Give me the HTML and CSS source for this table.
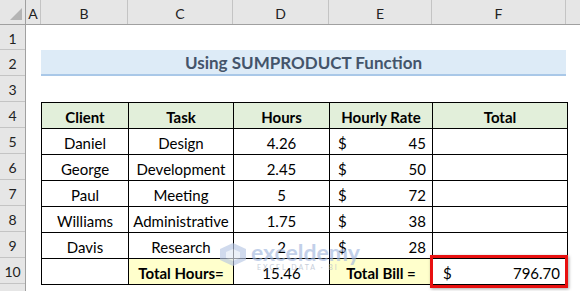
FILE: index.html
```html
<!DOCTYPE html>
<html lang="en">
<head>
    <meta charset="UTF-8">
    <title>Using SUMPRODUCT Function</title>
    <link rel="stylesheet" href="styles.css">
</head>
<body>
    <div class="sheet">
        <div class="col-heads">
            <div class="corner">
                <svg width="26" height="24" viewBox="0 0 26 24">
                    <polygon points="22,8 22,20 10,20" fill="#b4b4b4"/>
                </svg>
            </div>
            <div class="col-head">A</div>
            <div class="col-head">B</div>
            <div class="col-head">C</div>
            <div class="col-head">D</div>
            <div class="col-head">E</div>
            <div class="col-head">F</div>
            <div class="col-head last"></div>
        </div>

        <div class="sheet-body">
            <div class="row-heads">
                <div class="row-head first">1</div>
                <div class="row-head">2</div>
                <div class="row-head">3</div>
                <div class="row-head">4</div>
                <div class="row-head">5</div>
                <div class="row-head">6</div>
                <div class="row-head">7</div>
                <div class="row-head">8</div>
                <div class="row-head">9</div>
                <div class="row-head">10</div>
                <div class="row-head">11</div>
            </div>

            <div class="cells">
                <div class="blank first"></div>
                <div class="title">Using SUMPRODUCT Function</div>
                <div class="blank"></div>

                <table class="data">
                    <colgroup>
                        <col class="c-b">
                        <col class="c-c">
                        <col class="c-d">
                        <col class="c-e">
                        <col class="c-f">
                    </colgroup>
                    <thead>
                        <tr>
                            <th>Client</th>
                            <th>Task</th>
                            <th>Hours</th>
                            <th>Hourly Rate</th>
                            <th>Total</th>
                        </tr>
                    </thead>
                    <tbody>
                        <tr>
                            <td>Daniel</td>
                            <td>Design</td>
                            <td>4.26</td>
                            <td><div class="money"><span>$</span><span>45</span></div></td>
                            <td></td>
                        </tr>
                        <tr>
                            <td>George</td>
                            <td>Development</td>
                            <td>2.45</td>
                            <td><div class="money"><span>$</span><span>50</span></div></td>
                            <td></td>
                        </tr>
                        <tr>
                            <td>Paul</td>
                            <td>Meeting</td>
                            <td>5</td>
                            <td><div class="money"><span>$</span><span>72</span></div></td>
                            <td></td>
                        </tr>
                        <tr>
                            <td>Williams</td>
                            <td>Administrative</td>
                            <td>1.75</td>
                            <td><div class="money"><span>$</span><span>38</span></div></td>
                            <td></td>
                        </tr>
                        <tr>
                            <td>Davis</td>
                            <td>Research</td>
                            <td>2</td>
                            <td><div class="money"><span>$</span><span>28</span></div></td>
                            <td></td>
                        </tr>
                        <tr>
                            <td></td>
                            <td class="label">Total Hours=</td>
                            <td>15.46</td>
                            <td class="label">Total Bill =</td>
                            <td class="result"><div class="money"><span>$</span><span>796.70</span></div></td>
                        </tr>
                    </tbody>
                </table>
            </div>
        </div>

        <div class="watermark">
            <svg width="30" height="25" viewBox="0 0 30 25">
                <polygon points="15,1 28,7 28,18 15,24 2,18 2,7" fill="#b7c7e4"/>
                <polygon points="15,7 22,10 22,16 15,19 8,16 8,10" fill="#e3eaf5"/>
            </svg>
            <div class="wm-text">
                <div class="wm-name">exceldemy</div>
                <div class="wm-sub">EXCEL DATA · BI</div>
            </div>
        </div>
    </div>
</body>
</html>
```

FILE: styles.css
```css
* {
    margin: 0;
    padding: 0;
    box-sizing: border-box;
}

body {
    font-family: Lato, 'Liberation Sans', sans-serif;
    background: white;
    color: #000;
}

.sheet {
    position: relative;
    width: 580px;
    height: 291px;
    overflow: hidden;
}

/* column letters */
.col-heads {
    display: grid;
    grid-template-columns: 26px 15px 87px 105px 96px 103px 134px 1fr;
    height: 25px;
    background: #e6e6e6;
    border-bottom: 1px solid #a0a0a0;
}

.corner {
    border-right: 1px solid #a0a0a0;
}

.corner svg {
    display: block;
}

.col-head {
    display: flex;
    align-items: center;
    justify-content: center;
    font-size: 14px;
    color: #222;
    border-right: 1px solid #c4c4c4;
    padding-top: 2px;
}

.col-head.last {
    border-right: none;
}

/* row numbers + cells */
.sheet-body {
    display: flex;
}

.row-heads {
    width: 26px;
    background: #e6e6e6;
    border-right: 1px solid #a0a0a0;
}

.row-head {
    height: 26px;
    display: flex;
    align-items: center;
    justify-content: center;
    font-size: 14px;
    color: #222;
    border-bottom: 1px solid #c4c4c4;
    padding-top: 2px;
}

.row-head.first {
    height: 25px;
}

.cells {
    padding-left: 15px;
}

.blank {
    height: 26px;
}

.blank.first {
    height: 25px;
}

.title {
    width: 525px;
    height: 26px;
    background: #ddebf7;
    border-bottom: 2px solid #a9c8e8;
    color: #44546a;
    font-size: 17px;
    font-weight: 700;
    display: flex;
    align-items: center;
    justify-content: center;
    padding-top: 1px;
}

/* the table */
.data {
    border-collapse: collapse;
    table-layout: fixed;
    width: 526px;
    font-size: 15px;
}

.c-b { width: 87px; }
.c-c { width: 105px; }
.c-d { width: 96px; }
.c-e { width: 103px; }
.c-f { width: 135px; }

.data th,
.data td {
    border: 1px solid #000;
    height: 26px;
    text-align: center;
    white-space: nowrap;
    padding: 2px 0 0;
}

.data th {
    background: #e2efda;
    font-weight: 700;
}

.data td.label {
    background: #ffffcc;
    font-weight: 700;
}

.money {
    display: flex;
    justify-content: space-between;
    padding: 0 6px 0 8px;
}

.data td.result {
    position: relative;
}

.data td.result .money {
    padding: 0 7px 0 10px;
}

.data td.result::after {
    content: "";
    position: absolute;
    top: -4px;
    left: -3px;
    right: -1px;
    bottom: -4px;
    border: 3px solid #e81010;
    box-shadow: 1px 1px 3px rgba(0, 0, 0, 0.35);
}

/* faint logo over the table */
.watermark {
    position: absolute;
    left: 218px;
    top: 242px;
    display: flex;
    align-items: flex-start;
    gap: 3px;
    opacity: 0.65;
    pointer-events: none;
}

.wm-text {
    display: flex;
    flex-direction: column;
}

.wm-name {
    font-size: 23px;
    font-weight: 700;
    line-height: 21px;
    color: #a3b8de;
}

.wm-sub {
    font-size: 7px;
    line-height: 9px;
    letter-spacing: 2px;
    color: #a9b4c8;
    padding-left: 6px;
}
```
